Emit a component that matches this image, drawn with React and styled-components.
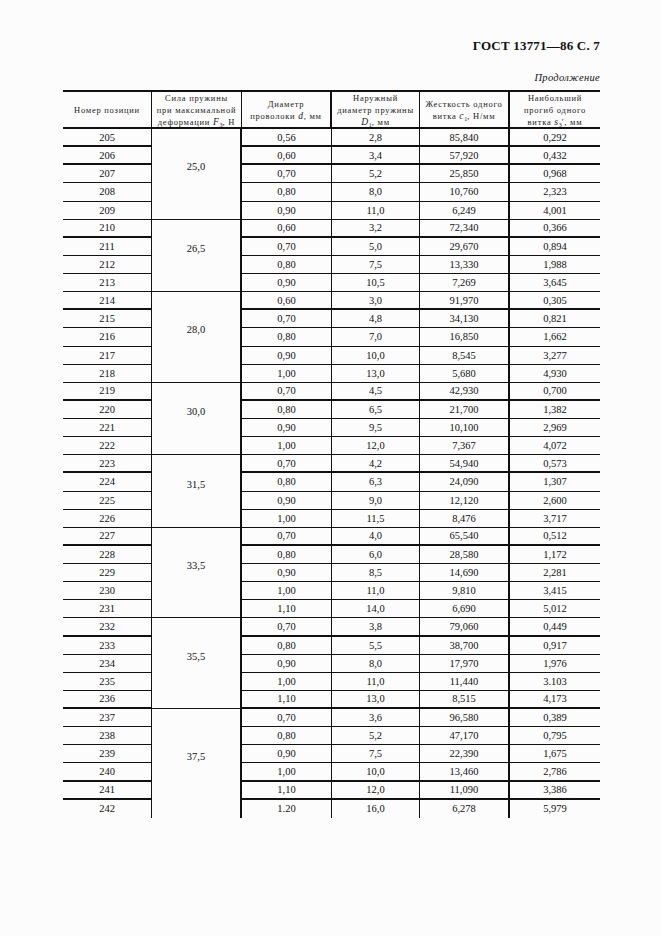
import React from "react";
import styled, { createGlobalStyle } from "styled-components";

const GlobalStyle = createGlobalStyle`
  html, body {
    margin: 0;
    padding: 0;
    background: #fcfcfc;
  }
  body {
    font-family: "Liberation Serif", "Times New Roman", serif;
    color: #111;
  }
`;

const groups = [
  {
    force: "25,0",
    rows: [
      ["205", "0,56", "2,8", "85,840", "0,292"],
      ["206", "0,60", "3,4", "57,920", "0,432"],
      ["207", "0,70", "5,2", "25,850", "0,968"],
      ["208", "0,80", "8,0", "10,760", "2,323"],
      ["209", "0,90", "11,0", "6,249", "4,001"],
    ],
  },
  {
    force: "26,5",
    rows: [
      ["210", "0,60", "3,2", "72,340", "0,366"],
      ["211", "0,70", "5,0", "29,670", "0,894"],
      ["212", "0,80", "7,5", "13,330", "1,988"],
      ["213", "0,90", "10,5", "7,269", "3,645"],
    ],
  },
  {
    force: "28,0",
    rows: [
      ["214", "0,60", "3,0", "91,970", "0,305"],
      ["215", "0,70", "4,8", "34,130", "0,821"],
      ["216", "0,80", "7,0", "16,850", "1,662"],
      ["217", "0,90", "10,0", "8,545", "3,277"],
      ["218", "1,00", "13,0", "5,680", "4,930"],
    ],
  },
  {
    force: "30,0",
    rows: [
      ["219", "0,70", "4,5", "42,930", "0,700"],
      ["220", "0,80", "6,5", "21,700", "1,382"],
      ["221", "0,90", "9,5", "10,100", "2,969"],
      ["222", "1,00", "12,0", "7,367", "4,072"],
    ],
  },
  {
    force: "31,5",
    rows: [
      ["223", "0,70", "4,2", "54,940", "0,573"],
      ["224", "0,80", "6,3", "24,090", "1,307"],
      ["225", "0,90", "9,0", "12,120", "2,600"],
      ["226", "1,00", "11,5", "8,476", "3,717"],
    ],
  },
  {
    force: "33,5",
    rows: [
      ["227", "0,70", "4,0", "65,540", "0,512"],
      ["228", "0,80", "6,0", "28,580", "1,172"],
      ["229", "0,90", "8,5", "14,690", "2,281"],
      ["230", "1,00", "11,0", "9,810", "3,415"],
      ["231", "1,10", "14,0", "6,690", "5,012"],
    ],
  },
  {
    force: "35,5",
    rows: [
      ["232", "0,70", "3,8", "79,060", "0,449"],
      ["233", "0,80", "5,5", "38,700", "0,917"],
      ["234", "0,90", "8,0", "17,970", "1,976"],
      ["235", "1,00", "11,0", "11,440", "3.103"],
      ["236", "1,10", "13,0", "8,515", "4,173"],
    ],
  },
  {
    force: "37,5",
    rows: [
      ["237", "0,70", "3,6", "96,580", "0,389"],
      ["238", "0,80", "5,2", "47,170", "0,795"],
      ["239", "0,90", "7,5", "22,390", "1,675"],
      ["240", "1,00", "10,0", "13,460", "2,786"],
      ["241", "1,10", "12,0", "11,090", "3,386"],
      ["242", "1.20", "16,0", "6,278", "5,979"],
    ],
  },
];

// row lines that came out heavier in the scan
const heavy = new Set(["205", "206", "210", "214", "219", "223", "227", "232", "236", "240", "241"]);

const Page = styled.div`
  width: 661px;
  box-sizing: border-box;
  padding: 38px 61px 0 63px;
`;

const Title = styled.div`
  text-align: right;
  font-weight: bold;
  font-size: 13px;
  line-height: 16px;
  letter-spacing: 0.2px;
`;

const Continued = styled.div`
  text-align: right;
  font-style: italic;
  font-size: 10.5px;
  line-height: 14px;
  margin-top: 17px;
  letter-spacing: 0.3px;
`;

const Grid = styled.div`
  display: grid;
  grid-template-columns: 89px 90px 90px 88px 90px 90px;
  grid-template-rows: 39px;
  grid-auto-rows: 18.14px;
  margin-top: 5px;
`;

const Cell = styled.div`
  box-sizing: border-box;
  display: flex;
  align-items: center;
  justify-content: center;
  text-align: center;
  border-right: ${({ $thick, $last }) => ($last ? "0" : $thick ? "2.5px" : "1px")} solid #111;
  border-bottom: ${({ $bottom }) => $bottom || "0"} solid #111;
`;

const Head = styled(Cell)`
  border-top: 2px solid #111;
  border-bottom: 2px solid #111;
  color: #222;
  padding: 0 1px;
`;

const HeadText = styled.span`
  display: block;
  font-size: 8.5px;
  line-height: 12px;
  letter-spacing: 0.75px;
  white-space: nowrap;
`;

const Data = styled(Cell)`
  font-size: 10.5px;
  line-height: 12px;
  padding-top: 1px;
`;

const Force = styled(Cell)`
  grid-row: span ${({ $span }) => $span};
  font-size: 10.5px;
  padding-bottom: 14px;
`;

const Var = styled.i`
  font-style: italic;
  font-size: 9.5px;
`;

const Sub = styled.sub`
  font-size: 6px;
  vertical-align: -2px;
  line-height: 0;
  letter-spacing: 0;
`;

export default function App() {
  return (
    <>
      <GlobalStyle />
      <Page>
        <Title>ГОСТ 13771—86 С. 7</Title>
        <Continued>Продолжение</Continued>
        <Grid>
          <Head>
            <HeadText>Номер позиции</HeadText>
          </Head>
          <Head>
            <HeadText>
              Сила пружины
              <br />
              при максимальной
              <br />
              деформации <Var>F</Var>
              <Sub>3</Sub>, Н
            </HeadText>
          </Head>
          <Head $thick>
            <HeadText>
              Диаметр
              <br />
              проволоки <Var>d</Var>, мм
            </HeadText>
          </Head>
          <Head>
            <HeadText>
              Наружный
              <br />
              диаметр пружины
              <br />
              <Var>D</Var>
              <Sub>1</Sub>, мм
            </HeadText>
          </Head>
          <Head $thick>
            <HeadText>
              Жесткость одного
              <br />
              витка <Var>c</Var>
              <Sub>1</Sub>, Н/мм
            </HeadText>
          </Head>
          <Head $last>
            <HeadText>
              Наибольший
              <br />
              прогиб одного
              <br />
              витка <Var>s</Var>
              <Sub>3</Sub>′, мм
            </HeadText>
          </Head>
          {groups.map((g, gi) => {
            const lastGroup = gi === groups.length - 1;
            return g.rows.map((r, ri) => {
              const lastRow = lastGroup && ri === g.rows.length - 1;
              const line = lastRow ? "0" : heavy.has(r[0]) ? "2px" : "1px";
              return (
                <React.Fragment key={r[0]}>
                  <Data $bottom={line}>{r[0]}</Data>
                  {ri === 0 && (
                    <Force $span={g.rows.length} $thick $bottom={lastGroup ? "0" : "1px"}>
                      {g.force}
                    </Force>
                  )}
                  <Data $bottom={line}>{r[1]}</Data>
                  <Data $bottom={line}>{r[2]}</Data>
                  <Data $thick $bottom={line}>
                    {r[3]}
                  </Data>
                  <Data $last $bottom={line}>
                    {r[4]}
                  </Data>
                </React.Fragment>
              );
            });
          })}
        </Grid>
      </Page>
    </>
  );
}
